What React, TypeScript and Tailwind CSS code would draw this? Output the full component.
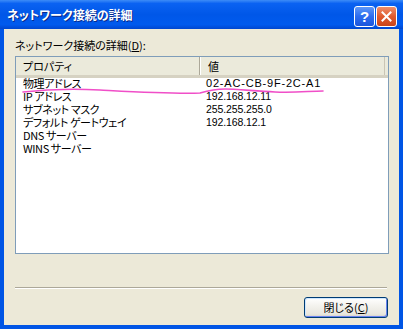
import React from 'react';

const jp = "font-['Noto_Sans_CJK_JP','Noto_Sans',sans-serif] [font-feature-settings:'palt']";

const rows: { name: string; value: string; mac?: boolean }[] = [
  { name: '物理アドレス', value: '02-AC-CB-9F-2C-A1', mac: true },
  { name: 'IP アドレス', value: '192.168.12.11' },
  { name: 'サブネット マスク', value: '255.255.255.0' },
  { name: 'デフォルト ゲートウェイ', value: '192.168.12.1' },
  { name: 'DNS サーバー', value: '' },
  { name: 'WINS サーバー', value: '' },
];

function TitleBar() {
  return (
    <div className="h-[29px] flex items-center pl-[7px] pr-[6px] bg-[linear-gradient(180deg,#3d8cf7_0%,#0a62f2_12%,#0057e8_50%,#005aee_85%,#0046cf_100%)]">
      <span className={`${jp} flex-1 text-[12px] font-bold text-white leading-none [text-shadow:1px_1px_0_#0a2a8a]`}>
        ネットワーク接続の詳細
      </span>
      <div className="flex gap-[1px] mt-[3px]">
        <div className="w-[21px] h-[21px] rounded-[3px] border border-white flex items-center justify-center bg-[linear-gradient(180deg,#5d97f8_0%,#2c6cef_50%,#1a55dc_100%)]">
          <span className="font-['Liberation_Sans',sans-serif] text-[15px] font-bold text-white leading-none">?</span>
        </div>
        <div className="w-[21px] h-[21px] rounded-[3px] border border-white flex items-center justify-center bg-[linear-gradient(180deg,#ee8e6a_0%,#e05a2e_50%,#c9441a_100%)]">
          <svg width="11" height="11" viewBox="0 0 11 11">
            <path d="M1.5 1.5 L9.5 9.5 M9.5 1.5 L1.5 9.5" stroke="white" strokeWidth="2" strokeLinecap="square" />
          </svg>
        </div>
      </div>
    </div>
  );
}

function ListBox() {
  return (
    <div className="h-[198px] border border-[#7f9db9] bg-white flex flex-col">
      <div className="h-[21px] flex bg-[#ebeadb] border-b-[3px] border-[#d6d2c2]">
        <div className="w-[184px] flex items-center pl-[7px] border-r border-[#aca899]">
          <span className={`${jp} text-[11px] text-black leading-none`}>プロパティ</span>
        </div>
        <div className="w-[1px] bg-white" />
        <div className="flex-1 flex items-center pl-[7px] border-r border-[#c9c5b5]">
          <span className={`${jp} text-[11px] text-black leading-none`}>値</span>
        </div>
        <div className="w-[3px]" />
      </div>
      <div className="flex flex-col">
        {rows.map((r) => (
          <div key={r.name} className="h-[13px] flex items-start">
            <div className="w-[190px] pl-[7px] h-[13px]">
              <span className={`${jp} block text-[11px] text-black leading-[13px] tracking-[-0.4px] -mt-[1px]`}>{r.name}</span>
            </div>
            <div className="flex-1 h-[13px]">
              <span
                className={`font-['Liberation_Sans',sans-serif] block text-black leading-[13px] -mt-[1px] ${
                  r.mac ? 'text-[11px] tracking-[0.8px]' : 'text-[10.5px] tracking-[-0.1px]'
                }`}
              >
                {r.value}
              </span>
            </div>
          </div>
        ))}
      </div>
    </div>
  );
}

export default function App() {
  return (
    <div className="relative w-[403px] h-[329px] flex flex-col bg-[#0055e5] overflow-hidden">
      <TitleBar />
      <div className="flex-1 mx-[4px] mb-[4px] bg-[#ece9d8] flex flex-col pl-[11px] pr-[10px]">
        <div className={`${jp} mt-[9px] h-[14px] text-[11px] text-black leading-[14px]`}>
          ネットワーク接続の詳細(<span className="underline">D</span>):
        </div>
        <div className="mt-[4px]">
          <ListBox />
        </div>
        <div className="mt-[33px] h-[2px] border-t border-[#aca899] border-b border-b-white mr-[2px]" />
        <div className="mt-[8px] flex justify-end pr-[1px]">
          <button className="w-[84px] h-[21px] rounded-[3px] border border-[#003c74] bg-[linear-gradient(180deg,#ffffff_0%,#f4f3ee_40%,#e8e6de_85%,#d6d0c5_100%)] shadow-[inset_-1px_-1px_0_#6982ee,inset_1px_1px_0_#cee7ff] flex items-center justify-center">
            <span className={`${jp} text-[11px] text-black leading-none`}>
              閉じる(<span className="underline">C</span>)
            </span>
          </button>
        </div>
      </div>
      <svg className="absolute left-0 top-0 pointer-events-none" width="403" height="329">
        <path
          d="M23 92 C 50 89, 80 89, 100 90 S 170 94, 200 93 C 207 91, 215 89, 225 89 S 255 91, 275 92 S 310 91, 323 91"
          fill="none"
          stroke="#f04fc8"
          strokeWidth="1.6"
          strokeLinecap="round"
        />
      </svg>
    </div>
  );
}
